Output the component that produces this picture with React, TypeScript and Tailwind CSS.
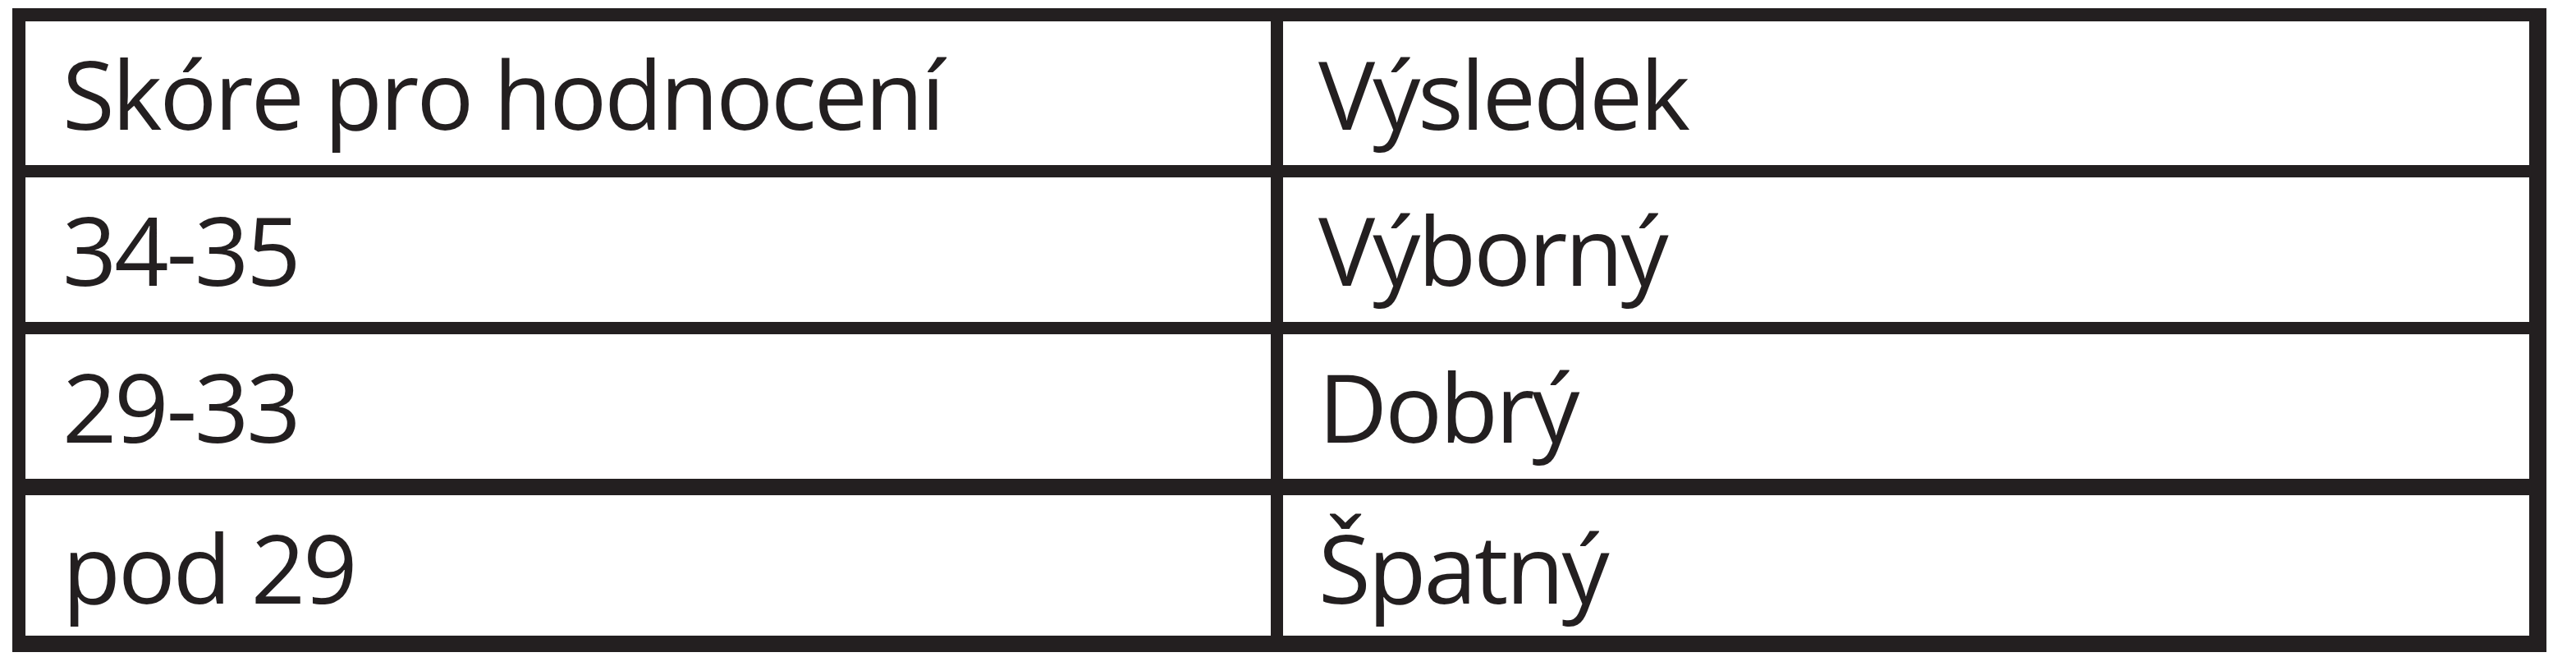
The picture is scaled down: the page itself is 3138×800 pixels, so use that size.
import React from 'react';

// heights include the bottom border (border-box)
const rows: { score: string; result: string; h: string; border: string }[] = [
  { score: 'Skóre pro hodnocení', result: 'Výsledek', h: 'h-[190px]', border: 'border-b-[15px]' },
  { score: '34-35', result: 'Výborný', h: 'h-[191px]', border: 'border-b-[15px]' },
  { score: '29-33', result: 'Dobrý', h: 'h-[196px]', border: 'border-b-[20px]' },
  { score: 'pod 29', result: 'Špatný', h: 'h-[171px]', border: '' },
];

export default function App() {
  return (
    <div className="w-[3138px] h-[800px] bg-white pt-[10px] pl-[15px]" style={{ fontFamily: '"Open Sans", "Noto Sans", sans-serif' }}>
      {/* Score table */}
      <div className="w-[3087px] border-[#231f20] border-t-[16px] border-l-[16px] border-r-[21px] border-b-[20px]">
        {rows.map((row, i) => (
          <div key={i} className={`flex border-[#231f20] ${row.border} ${row.h}`}>
            <div className="w-[1532px] shrink-0 border-r-[15px] border-[#231f20] pl-[45px] pt-[29px] text-[116px] leading-none tracking-[-3px] text-[#231f20]">
              {row.score}
            </div>
            <div className="flex-1 pl-[43px] pt-[29px] text-[116px] leading-none tracking-[-3px] text-[#231f20]">
              {row.result}
            </div>
          </div>
        ))}
      </div>
    </div>
  );
}
